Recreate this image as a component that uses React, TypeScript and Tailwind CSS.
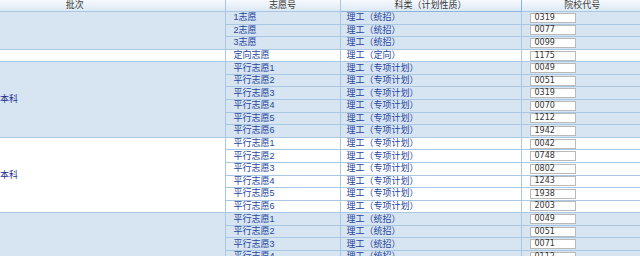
import React from 'react';

type Row = { no: string; kind: string; code: string };
type Group = { batch: string; bg: string; rows: Row[] };

const groups: Group[] = [
  {
    batch: '',
    bg: 'bg-[#d7e4f1]',
    rows: [
      { no: '1志愿', kind: '理工（统招）', code: '0319' },
      { no: '2志愿', kind: '理工（统招）', code: '0077' },
      { no: '3志愿', kind: '理工（统招）', code: '0099' },
    ],
  },
  {
    batch: '',
    bg: 'bg-white',
    rows: [{ no: '定向志愿', kind: '理工（定向）', code: '1175' }],
  },
  {
    batch: '本科',
    bg: 'bg-[#d7e4f1]',
    rows: [
      { no: '平行志愿1', kind: '理工（专项计划）', code: '0049' },
      { no: '平行志愿2', kind: '理工（专项计划）', code: '0051' },
      { no: '平行志愿3', kind: '理工（专项计划）', code: '0319' },
      { no: '平行志愿4', kind: '理工（专项计划）', code: '0070' },
      { no: '平行志愿5', kind: '理工（专项计划）', code: '1212' },
      { no: '平行志愿6', kind: '理工（专项计划）', code: '1942' },
    ],
  },
  {
    batch: '本科',
    bg: 'bg-white',
    rows: [
      { no: '平行志愿1', kind: '理工（专项计划）', code: '0042' },
      { no: '平行志愿2', kind: '理工（专项计划）', code: '0748' },
      { no: '平行志愿3', kind: '理工（专项计划）', code: '0802' },
      { no: '平行志愿4', kind: '理工（专项计划）', code: '1243' },
      { no: '平行志愿5', kind: '理工（专项计划）', code: '1938' },
      { no: '平行志愿6', kind: '理工（专项计划）', code: '2003' },
    ],
  },
  {
    batch: '',
    bg: 'bg-[#d7e4f1]',
    rows: [
      { no: '平行志愿1', kind: '理工（统招）', code: '0049' },
      { no: '平行志愿2', kind: '理工（统招）', code: '0051' },
      { no: '平行志愿3', kind: '理工（统招）', code: '0071' },
      { no: '平行志愿4', kind: '理工（统招）', code: '0112' },
    ],
  },
];

const cell = 'h-[12.58px] p-0 border-b border-[#a9c7e3] align-middle whitespace-nowrap';

const App: React.FC = () => {
  return (
    <div className="w-[640px] h-[256px] overflow-hidden bg-white font-['Liberation_Sans','Noto_Sans_CJK_SC',sans-serif] text-[9px] leading-none">
      <table className="ml-[-75px] w-[718px] table-fixed border-collapse">
        <colgroup>
          <col className="w-[300px]" />
          <col className="w-[115px]" />
          <col className="w-[181px]" />
          <col className="w-[122px]" />
        </colgroup>
        <thead>
          <tr className="bg-gradient-to-b from-[#f7fafd] to-[#d9e7f3] text-[#3a3a3a]">
            <th className="h-[11.5px] p-0 font-normal border-b border-r border-[#a9c7e3]">批次</th>
            <th className="h-[11.5px] p-0 font-normal border-b border-r border-[#a9c7e3]">志愿号</th>
            <th className="h-[11.5px] p-0 font-normal border-b border-r border-[#8fb4d9]">科类（计划性质）</th>
            <th className="h-[11.5px] p-0 font-normal border-b border-[#a9c7e3]">院校代号</th>
          </tr>
        </thead>
        <tbody className="text-[#2646a0]">
          {groups.map((g, gi) =>
            g.rows.map((r, ri) => (
              <tr key={`${gi}-${ri}`} className={g.bg}>
                {ri === 0 && (
                  <td rowSpan={g.rows.length} className={`${cell} border-r border-[#a9c7e3] pl-[75px] text-[#1c2f8f]`}>
                    {g.batch}
                  </td>
                )}
                <td className={`${cell} border-r border-[#a9c7e3] pl-[8px]`}>{r.no}</td>
                <td className={`${cell} border-r border-[#8fb4d9] pl-[6px]`}>{r.kind}</td>
                <td className={`${cell} pl-[8px]`}>
                  <div className="w-[46px] h-[10px] bg-white border border-[#b9b9b9] pl-[4px] text-[8px] leading-[8px] text-[#333] font-['DejaVu_Sans',sans-serif]">
                    {r.code}
                  </div>
                </td>
              </tr>
            ))
          )}
        </tbody>
      </table>
    </div>
  );
};

export default App;
